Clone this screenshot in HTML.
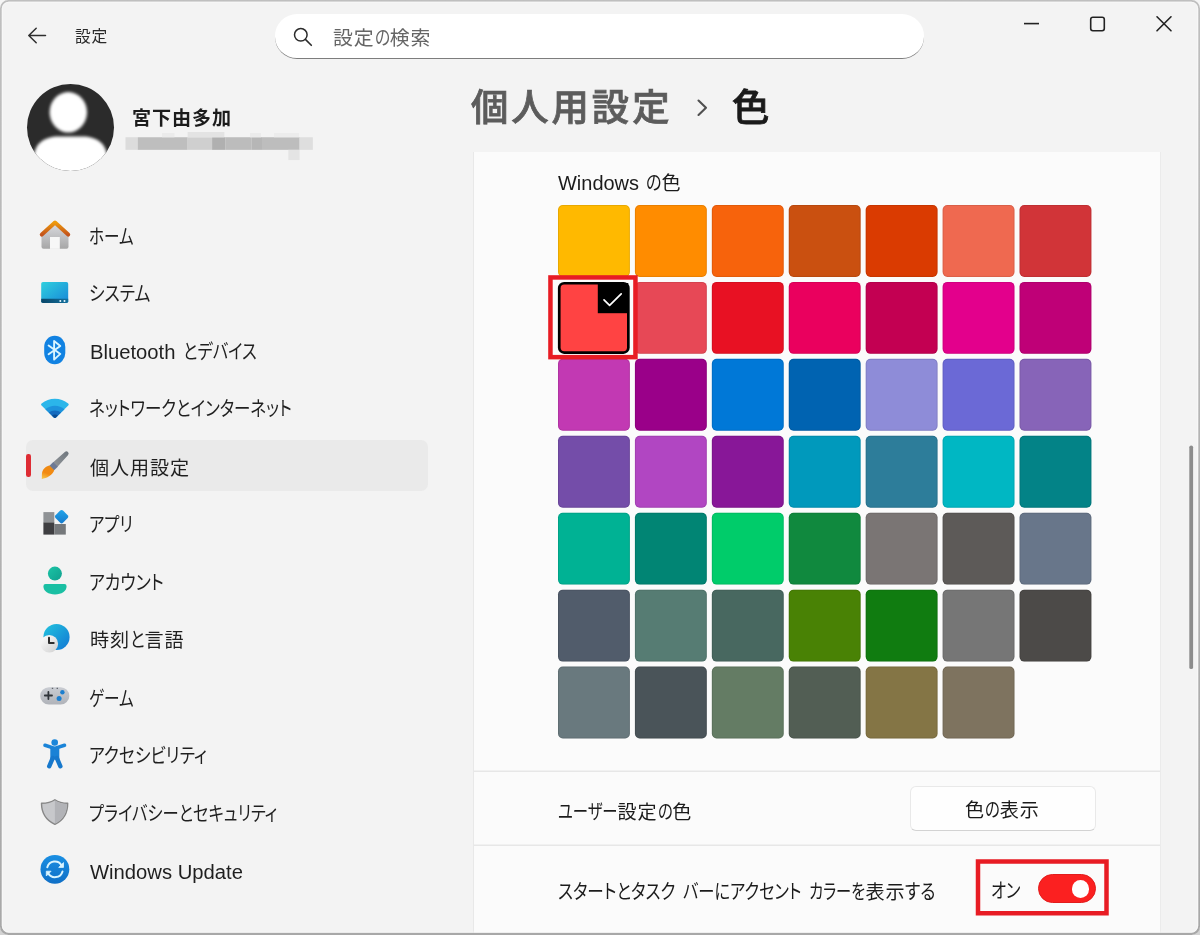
<!DOCTYPE html>
<html lang="ja">
<head>
<meta charset="utf-8">
<title>設定 - 色</title>
<style>
*{box-sizing:border-box;margin:0;padding:0}
html,body{width:1200px;height:935px;overflow:hidden;background:#f3f3f3}
body{font-family:"Liberation Sans","Noto Sans CJK JP",sans-serif;color:#1b1b1b;position:relative}
.t{position:absolute;white-space:nowrap;line-height:1;will-change:transform}
svg{position:absolute;overflow:visible}
.r{display:inline-block;white-space:nowrap}
.s{display:inline-block;transform-origin:0 50%;white-space:nowrap}
.k{font-feature-settings:"palt"}
#frame{position:absolute;left:0;top:0;width:1200px;height:935px;pointer-events:none;z-index:50}
/* title bar */
#search{position:absolute;left:275px;top:14px;width:649px;height:44.5px;border-radius:22px;background:#fff;border-bottom:1.5px solid #7d7d7d}
/* profile */
#avatar{position:absolute;left:27px;top:84px;width:87px;height:87px;border-radius:50%;background:#2b2b2b;overflow:hidden}
.mz{position:absolute}
/* nav */
#sel{position:absolute;left:26px;top:440px;width:402px;height:51px;border-radius:7px;background:#eaeaea}
#pill{position:absolute;left:26.2px;top:454.3px;width:4.4px;height:22.8px;border-radius:2.2px;background:#de2c34}
/* header */
/* card */
#card{position:absolute;left:472.5px;top:152px;width:688px;height:790px;background:#fbfbfb;border-left:1px solid #e8e8e8;border-right:1px solid #ebebeb}
.sep{position:absolute;left:473px;width:688px;height:1.5px;background:#e6e6e6}
.tile{position:absolute;width:72.1px;height:72px;border-radius:5px;box-shadow:inset 0 0 0 1px rgba(0,0,0,.09)}
#btn{position:absolute;left:909.5px;top:786px;width:186px;height:45px;border-radius:6px;background:#fefefe;border:1px solid #e9e9e9;border-bottom:1.5px solid #d3d3d3}
.redbox{position:absolute;border:4.5px solid #e81c23}
</style>
</head>
<body>
<!-- title bar -->
<svg style="left:26px;top:25px" width="22" height="22" viewBox="0 0 22 22"><path d="M19.5 10.5H3M10.2 3.2L2.8 10.5l7.4 7.3" fill="none" stroke="#2e2e2e" stroke-width="1.5" stroke-linecap="round" stroke-linejoin="round"/></svg>
<div id="search"><svg style="left:18px;top:13px" width="20" height="20" viewBox="0 0 20 20"><circle cx="7.8" cy="7.8" r="6.3" fill="none" stroke="#2b2b2b" stroke-width="1.5"/><path d="M12.4 12.4L18.3 18.3" stroke="#2b2b2b" stroke-width="1.6" stroke-linecap="round"/></svg></div>
<svg style="left:1024px;top:16px" width="150" height="16" viewBox="0 0 150 16"><path d="M0 7.6h15" stroke="#222" stroke-width="1.6"/><rect x="66.7" y="1.2" width="13.6" height="13.6" rx="2.2" fill="none" stroke="#222" stroke-width="1.6"/><path d="M133 0.8l14 14M147 0.8l-14 14" stroke="#222" stroke-width="1.6" stroke-linecap="round"/></svg>
<!-- profile -->
<div id="avatar"><svg style="left:0;top:0;filter:blur(1.5px)" width="87" height="87" viewBox="0 0 87 87"><ellipse cx="41.300" cy="28.300" rx="18.700" ry="20.200" fill="#fff"/><path d="M7 92V73C7 59 19 52.500 31 52.500H56C68 52.500 80 59 80 73V92Z" fill="#fff"/></svg></div>
<svg style="left:120px;top:128px" width="200" height="36" viewBox="120 128 200 36"><rect x="125.50" y="137.25" width="12.30" height="12.6" fill="#dcdcdc"/><rect x="137.75" y="137.25" width="49.90" height="12.6" fill="#bebebe"/><rect x="187.60" y="137.25" width="24.55" height="12.6" fill="#cfcfcf"/><rect x="212.10" y="137.25" width="13.20" height="12.6" fill="#b0b0b0"/><rect x="225.25" y="137.25" width="26.30" height="12.6" fill="#bcbcbc"/><rect x="251.50" y="137.25" width="10.55" height="12.6" fill="#b6b6b6"/><rect x="262.00" y="137.25" width="37.65" height="12.6" fill="#bdbdbd"/><rect x="299.60" y="137.25" width="13.25" height="12.6" fill="#dedede"/><rect x="187.6" y="132" width="36.8" height="5.3" fill="#e3e3e3"/><rect x="162" y="133" width="12.500" height="4.300" fill="#ebebeb"/><rect x="250" y="133" width="11" height="4.300" fill="#ebebeb"/><rect x="274" y="133" width="25" height="4.300" fill="#ececec"/><rect x="288.3" y="149.85" width="11.3" height="10.2" fill="#e4e4e4"/></svg>
<!-- nav -->
<div id="sel"></div><div id="pill"></div>
<!-- nav icons (page coordinates) -->
<svg style="left:0;top:200px" width="90" height="735" viewBox="0 200 90 735">
<defs>
<linearGradient id="gRoof" x1="0" y1="0" x2="0" y2="1"><stop offset="0" stop-color="#ee9a0c"/><stop offset="1" stop-color="#c4541b"/></linearGradient>
<linearGradient id="gHouse" x1="0" y1="0" x2="0" y2="1"><stop offset="0" stop-color="#dcdde2"/><stop offset="1" stop-color="#a6a6a6"/></linearGradient>
<linearGradient id="gSys" x1="0" y1="0" x2="1" y2="1"><stop offset="0" stop-color="#2fd0de"/><stop offset="1" stop-color="#1787d8"/></linearGradient>
<linearGradient id="gSysB" x1="0" y1="0" x2="1" y2="0"><stop offset="0" stop-color="#0a4668"/><stop offset="1" stop-color="#116f9c"/></linearGradient>
<linearGradient id="gBlue" x1="0" y1="0" x2="0" y2="1"><stop offset="0" stop-color="#1a8fe3"/><stop offset="1" stop-color="#0f6fc6"/></linearGradient>
<linearGradient id="gBrush" x1="1" y1="0" x2="0" y2="0"><stop offset="0" stop-color="#70787f"/><stop offset="1" stop-color="#8e9297"/></linearGradient>
<linearGradient id="gTip" x1="1" y1="0" x2="0" y2="0.300"><stop offset="0" stop-color="#ee8a14"/><stop offset=".6" stop-color="#f28a12"/><stop offset="1" stop-color="#f7c044"/></linearGradient>
<linearGradient id="gDia" x1="0" y1="0" x2="1" y2="1"><stop offset="0" stop-color="#22a6ea"/><stop offset="1" stop-color="#1478cc"/></linearGradient>
<linearGradient id="gTeal" x1="0" y1="0" x2="1" y2="1"><stop offset="0" stop-color="#1cc4a6"/><stop offset="1" stop-color="#10a08e"/></linearGradient>
<linearGradient id="gGlobe" x1="0" y1="0" x2="1" y2="1"><stop offset="0" stop-color="#22c4de"/><stop offset="1" stop-color="#1277d4"/></linearGradient>
<linearGradient id="gClock" x1="0" y1="0" x2="1" y2="1"><stop offset="0" stop-color="#ffffff"/><stop offset="1" stop-color="#cfcfcf"/></linearGradient>
<linearGradient id="gPad" x1="0" y1="0" x2="0" y2="1"><stop offset="0" stop-color="#c9ccd2"/><stop offset="1" stop-color="#b0b3b9"/></linearGradient>
</defs>
<!-- home -->
<path d="M41.5 234.5L55 222.5 68.5 234.5V246.8a2 2 0 0 1-2 2H43.5a2 2 0 0 1-2-2Z" fill="url(#gHouse)"/>
<rect x="50" y="237" width="9.8" height="11.9" fill="#f7f7f7"/>
<path d="M41.8 234.6L55 222.6 68.2 234.6" fill="none" stroke="url(#gRoof)" stroke-width="4" stroke-linecap="round" stroke-linejoin="round"/>
<!-- system -->
<rect x="41.2" y="281.9" width="27" height="21.1" rx="1.8" fill="url(#gSys)"/>
<path d="M41.2 298.7h27v2.5a1.8 1.8 0 0 1-1.8 1.8H43a1.8 1.8 0 0 1-1.8-1.8Z" fill="url(#gSysB)"/>
<circle cx="60.3" cy="301" r="1" fill="#e8f6ff"/><circle cx="64.5" cy="301" r="1" fill="#e8f6ff"/>
<!-- bluetooth -->
<rect x="44.2" y="335.7" width="21.1" height="28.6" rx="10.500" ry="11.200" fill="#1182e2"/>
<path d="M48.6 345.6L60.3 353.9 54.1 359.6V340.9L60.3 345.9 48.6 354.2" fill="none" stroke="#d9f5ff" stroke-width="1.9" stroke-linejoin="round" stroke-linecap="round"/>
<!-- wifi -->
<path d="M41.3 405.3Q40.6 404.3 41.6 403.500A20.800 20.800 0 0 1 68.200 403.500Q69.200 404.300 68.500 405.300L56.200 417.300Q54.900 418.500 53.600 417.300Z" fill="#2bb6ea"/>
<path d="M45.300 409.200A14.800 14.800 0 0 1 64.500 409.200L56.200 417.300Q54.900 418.500 53.600 417.300Z" fill="#1d93dc"/>
<path d="M48.800 412.600A9.600 9.600 0 0 1 61 412.600L56.200 417.300Q54.900 418.500 53.600 417.300Z" fill="#136bbf"/>
<path d="M51.900 415.600A4.800 4.800 0 0 1 57.900 415.600L56.200 417.300Q54.900 418.500 53.600 417.300Z" fill="#0b4c93"/>
<!-- brush -->
<g transform="translate(41.200 478.400) rotate(-44.500)">
<path d="M19.500 -3.100L35.300 -2.200a2.200 2.200 0 0 1 0 4.400L19.500 3.100Z" fill="url(#gBrush)"/>
<rect x="14.500" y="-3.300" width="5.600" height="6.600" fill="#6d7a96"/>
<path d="M0 0.800C2.500 -1 4.500 -5.100 9.500 -5 12 -4.900 14.900 -3.700 14.900 -3.300V3.300C11.500 5.800 3.500 3.800 0 0.800Z" fill="url(#gTip)"/>
</g>
<!-- apps -->
<rect x="43.4" y="512.1" width="10.9" height="10.6" fill="#8f9295"/>
<rect x="43.4" y="522.5" width="10.9" height="12.1" fill="#3e3e41"/>
<rect x="54.3" y="524" width="11.5" height="10.6" fill="#75787b"/>
<rect x="56.300" y="511.400" width="10.600" height="10.600" rx="2" transform="rotate(45 61.600 516.700)" fill="url(#gDia)"/>
<!-- account -->
<circle cx="54.9" cy="573.6" r="7" fill="url(#gTeal)"/>
<path d="M45.600 584.100H64.400a2.200 2.200 0 0 1 2.200 2.200C66.600 591.300 61.500 594.500 55 594.500S43.400 591.300 43.400 586.300a2.200 2.200 0 0 1 2.200-2.200Z" fill="#1abfa3"/>
<!-- time -->
<circle cx="56.5" cy="637" r="13.1" fill="url(#gGlobe)"/>
<circle cx="49.3" cy="643.7" r="8.8" fill="url(#gClock)"/>
<path d="M49 637.800V643.100H53.700" fill="none" stroke="#2e2e2e" stroke-width="2" stroke-linecap="round" stroke-linejoin="round"/>
<!-- game -->
<rect x="40.2" y="687.2" width="29.1" height="17.4" rx="8.7" fill="url(#gPad)"/>
<path d="M44.800 695.500h7.200M48.400 691.900v7.200" stroke="#30353a" stroke-width="1.8" stroke-linecap="round"/>
<circle cx="62.4" cy="692.3" r="2.2" fill="#1c7fcf"/><circle cx="59.1" cy="698.5" r="2.5" fill="#1c7fcf"/>
<path d="M51.800 688.300h1.400M56.600 688.300h1.400" stroke="#4a4e55" stroke-width="1"/>
<!-- accessibility -->
<circle cx="54.700" cy="742.500" r="3.300" fill="#1a86da"/>
<path d="M45 745.300L54.700 748.400 64.500 745.300" fill="none" stroke="#1a84d8" stroke-width="3.600" stroke-linecap="round" stroke-linejoin="round"/>
<path d="M50.300 747.500H59.300V759.500H50.300Z" fill="#1a82d6"/>
<path d="M52.800 758L49.200 766.300M56.800 758L60.400 766.300" fill="none" stroke="#1778cc" stroke-width="4.400" stroke-linecap="round"/>
<!-- shield -->
<path d="M54.900 799.700C58.500 802.200 62.500 803.200 67.700 803.200 67.700 813.500 64 820 54.900 824.400 45.800 820 41.500 813.500 41.500 803.200 47 803.200 51.300 802.200 54.900 799.700Z" fill="#c7c8cb" stroke="#878787" stroke-width="1.400" stroke-linejoin="round"/>
<path d="M54.900 800.600C58.300 802.800 62.200 803.900 66.900 804 66.800 813 63.400 819.300 54.900 823.500Z" fill="#b2b3b7"/>
<!-- update -->
<circle cx="54.900" cy="869.300" r="14.400" fill="url(#gBlue)"/>
<path d="M47.300 867.200A7.800 7.800 0 0 1 61.600 865.400" fill="none" stroke="#d9f4ff" stroke-width="2" stroke-linecap="round"/>
<path d="M63.500 862.600V867.400H58.700Z" fill="#d9f4ff" stroke="#d9f4ff" stroke-width=".8" stroke-linejoin="round"/>
<path d="M62.500 871.400A7.800 7.800 0 0 1 48.200 873.200" fill="none" stroke="#d9f4ff" stroke-width="2" stroke-linecap="round"/>
<path d="M46.300 876V871.200H51.100Z" fill="#d9f4ff" stroke="#d9f4ff" stroke-width=".8" stroke-linejoin="round"/>
</svg>
<!-- main -->
<svg style="left:697px;top:99px" width="11" height="18" viewBox="0 0 11 18"><path d="M1.5 1.5L9 8.7 1.5 16" fill="none" stroke="#505050" stroke-width="2.1" stroke-linecap="round" stroke-linejoin="round"/></svg>
<div id="card"></div>
<svg style="left:550px;top:200px" width="550" height="545" viewBox="550 200 550 545">
<rect x="558.00" y="205.00" width="71.90" height="71.90" rx="4.8" fill="#FFB900"/><rect x="558.50" y="205.50" width="70.90" height="70.90" rx="4.3" fill="none" stroke="#000" stroke-opacity=".09"/>
<rect x="634.92" y="205.00" width="71.90" height="71.90" rx="4.8" fill="#FF8C00"/><rect x="635.42" y="205.50" width="70.90" height="70.90" rx="4.3" fill="none" stroke="#000" stroke-opacity=".09"/>
<rect x="711.84" y="205.00" width="71.90" height="71.90" rx="4.8" fill="#F7630C"/><rect x="712.34" y="205.50" width="70.90" height="70.90" rx="4.3" fill="none" stroke="#000" stroke-opacity=".09"/>
<rect x="788.76" y="205.00" width="71.90" height="71.90" rx="4.8" fill="#CA5010"/><rect x="789.26" y="205.50" width="70.90" height="70.90" rx="4.3" fill="none" stroke="#000" stroke-opacity=".09"/>
<rect x="865.68" y="205.00" width="71.90" height="71.90" rx="4.8" fill="#DA3B01"/><rect x="866.18" y="205.50" width="70.90" height="70.90" rx="4.3" fill="none" stroke="#000" stroke-opacity=".09"/>
<rect x="942.60" y="205.00" width="71.90" height="71.90" rx="4.8" fill="#EF6950"/><rect x="943.10" y="205.50" width="70.90" height="70.90" rx="4.3" fill="none" stroke="#000" stroke-opacity=".09"/>
<rect x="1019.52" y="205.00" width="71.90" height="71.90" rx="4.8" fill="#D13438"/><rect x="1020.02" y="205.50" width="70.90" height="70.90" rx="4.3" fill="none" stroke="#000" stroke-opacity=".09"/>
<rect x="634.92" y="281.93" width="71.90" height="71.90" rx="4.8" fill="#E74856"/><rect x="635.42" y="282.43" width="70.90" height="70.90" rx="4.3" fill="none" stroke="#000" stroke-opacity=".09"/>
<rect x="711.84" y="281.93" width="71.90" height="71.90" rx="4.8" fill="#E81123"/><rect x="712.34" y="282.43" width="70.90" height="70.90" rx="4.3" fill="none" stroke="#000" stroke-opacity=".09"/>
<rect x="788.76" y="281.93" width="71.90" height="71.90" rx="4.8" fill="#EA005E"/><rect x="789.26" y="282.43" width="70.90" height="70.90" rx="4.3" fill="none" stroke="#000" stroke-opacity=".09"/>
<rect x="865.68" y="281.93" width="71.90" height="71.90" rx="4.8" fill="#C30052"/><rect x="866.18" y="282.43" width="70.90" height="70.90" rx="4.3" fill="none" stroke="#000" stroke-opacity=".09"/>
<rect x="942.60" y="281.93" width="71.90" height="71.90" rx="4.8" fill="#E3008C"/><rect x="943.10" y="282.43" width="70.90" height="70.90" rx="4.3" fill="none" stroke="#000" stroke-opacity=".09"/>
<rect x="1019.52" y="281.93" width="71.90" height="71.90" rx="4.8" fill="#BF0077"/><rect x="1020.02" y="282.43" width="70.90" height="70.90" rx="4.3" fill="none" stroke="#000" stroke-opacity=".09"/>
<rect x="558.00" y="358.86" width="71.90" height="71.90" rx="4.8" fill="#C239B3"/><rect x="558.50" y="359.36" width="70.90" height="70.90" rx="4.3" fill="none" stroke="#000" stroke-opacity=".09"/>
<rect x="634.92" y="358.86" width="71.90" height="71.90" rx="4.8" fill="#9A0089"/><rect x="635.42" y="359.36" width="70.90" height="70.90" rx="4.3" fill="none" stroke="#000" stroke-opacity=".09"/>
<rect x="711.84" y="358.86" width="71.90" height="71.90" rx="4.8" fill="#0078D7"/><rect x="712.34" y="359.36" width="70.90" height="70.90" rx="4.3" fill="none" stroke="#000" stroke-opacity=".09"/>
<rect x="788.76" y="358.86" width="71.90" height="71.90" rx="4.8" fill="#0063B1"/><rect x="789.26" y="359.36" width="70.90" height="70.90" rx="4.3" fill="none" stroke="#000" stroke-opacity=".09"/>
<rect x="865.68" y="358.86" width="71.90" height="71.90" rx="4.8" fill="#8E8CD8"/><rect x="866.18" y="359.36" width="70.90" height="70.90" rx="4.3" fill="none" stroke="#000" stroke-opacity=".09"/>
<rect x="942.60" y="358.86" width="71.90" height="71.90" rx="4.8" fill="#6B69D6"/><rect x="943.10" y="359.36" width="70.90" height="70.90" rx="4.3" fill="none" stroke="#000" stroke-opacity=".09"/>
<rect x="1019.52" y="358.86" width="71.90" height="71.90" rx="4.8" fill="#8764B8"/><rect x="1020.02" y="359.36" width="70.90" height="70.90" rx="4.3" fill="none" stroke="#000" stroke-opacity=".09"/>
<rect x="558.00" y="435.79" width="71.90" height="71.90" rx="4.8" fill="#744DA9"/><rect x="558.50" y="436.29" width="70.90" height="70.90" rx="4.3" fill="none" stroke="#000" stroke-opacity=".09"/>
<rect x="634.92" y="435.79" width="71.90" height="71.90" rx="4.8" fill="#B146C2"/><rect x="635.42" y="436.29" width="70.90" height="70.90" rx="4.3" fill="none" stroke="#000" stroke-opacity=".09"/>
<rect x="711.84" y="435.79" width="71.90" height="71.90" rx="4.8" fill="#881798"/><rect x="712.34" y="436.29" width="70.90" height="70.90" rx="4.3" fill="none" stroke="#000" stroke-opacity=".09"/>
<rect x="788.76" y="435.79" width="71.90" height="71.90" rx="4.8" fill="#0099BC"/><rect x="789.26" y="436.29" width="70.90" height="70.90" rx="4.3" fill="none" stroke="#000" stroke-opacity=".09"/>
<rect x="865.68" y="435.79" width="71.90" height="71.90" rx="4.8" fill="#2D7D9A"/><rect x="866.18" y="436.29" width="70.90" height="70.90" rx="4.3" fill="none" stroke="#000" stroke-opacity=".09"/>
<rect x="942.60" y="435.79" width="71.90" height="71.90" rx="4.8" fill="#00B7C3"/><rect x="943.10" y="436.29" width="70.90" height="70.90" rx="4.3" fill="none" stroke="#000" stroke-opacity=".09"/>
<rect x="1019.52" y="435.79" width="71.90" height="71.90" rx="4.8" fill="#038387"/><rect x="1020.02" y="436.29" width="70.90" height="70.90" rx="4.3" fill="none" stroke="#000" stroke-opacity=".09"/>
<rect x="558.00" y="512.72" width="71.90" height="71.90" rx="4.8" fill="#00B294"/><rect x="558.50" y="513.22" width="70.90" height="70.90" rx="4.3" fill="none" stroke="#000" stroke-opacity=".09"/>
<rect x="634.92" y="512.72" width="71.90" height="71.90" rx="4.8" fill="#018574"/><rect x="635.42" y="513.22" width="70.90" height="70.90" rx="4.3" fill="none" stroke="#000" stroke-opacity=".09"/>
<rect x="711.84" y="512.72" width="71.90" height="71.90" rx="4.8" fill="#00CC6A"/><rect x="712.34" y="513.22" width="70.90" height="70.90" rx="4.3" fill="none" stroke="#000" stroke-opacity=".09"/>
<rect x="788.76" y="512.72" width="71.90" height="71.90" rx="4.8" fill="#10893E"/><rect x="789.26" y="513.22" width="70.90" height="70.90" rx="4.3" fill="none" stroke="#000" stroke-opacity=".09"/>
<rect x="865.68" y="512.72" width="71.90" height="71.90" rx="4.8" fill="#7A7574"/><rect x="866.18" y="513.22" width="70.90" height="70.90" rx="4.3" fill="none" stroke="#000" stroke-opacity=".09"/>
<rect x="942.60" y="512.72" width="71.90" height="71.90" rx="4.8" fill="#5D5A58"/><rect x="943.10" y="513.22" width="70.90" height="70.90" rx="4.3" fill="none" stroke="#000" stroke-opacity=".09"/>
<rect x="1019.52" y="512.72" width="71.90" height="71.90" rx="4.8" fill="#68768A"/><rect x="1020.02" y="513.22" width="70.90" height="70.90" rx="4.3" fill="none" stroke="#000" stroke-opacity=".09"/>
<rect x="558.00" y="589.65" width="71.90" height="71.90" rx="4.8" fill="#515C6B"/><rect x="558.50" y="590.15" width="70.90" height="70.90" rx="4.3" fill="none" stroke="#000" stroke-opacity=".09"/>
<rect x="634.92" y="589.65" width="71.90" height="71.90" rx="4.8" fill="#567C73"/><rect x="635.42" y="590.15" width="70.90" height="70.90" rx="4.3" fill="none" stroke="#000" stroke-opacity=".09"/>
<rect x="711.84" y="589.65" width="71.90" height="71.90" rx="4.8" fill="#486860"/><rect x="712.34" y="590.15" width="70.90" height="70.90" rx="4.3" fill="none" stroke="#000" stroke-opacity=".09"/>
<rect x="788.76" y="589.65" width="71.90" height="71.90" rx="4.8" fill="#498205"/><rect x="789.26" y="590.15" width="70.90" height="70.90" rx="4.3" fill="none" stroke="#000" stroke-opacity=".09"/>
<rect x="865.68" y="589.65" width="71.90" height="71.90" rx="4.8" fill="#107C10"/><rect x="866.18" y="590.15" width="70.90" height="70.90" rx="4.3" fill="none" stroke="#000" stroke-opacity=".09"/>
<rect x="942.60" y="589.65" width="71.90" height="71.90" rx="4.8" fill="#767676"/><rect x="943.10" y="590.15" width="70.90" height="70.90" rx="4.3" fill="none" stroke="#000" stroke-opacity=".09"/>
<rect x="1019.52" y="589.65" width="71.90" height="71.90" rx="4.8" fill="#4C4A48"/><rect x="1020.02" y="590.15" width="70.90" height="70.90" rx="4.3" fill="none" stroke="#000" stroke-opacity=".09"/>
<rect x="558.00" y="666.58" width="71.90" height="71.90" rx="4.8" fill="#69797E"/><rect x="558.50" y="667.08" width="70.90" height="70.90" rx="4.3" fill="none" stroke="#000" stroke-opacity=".09"/>
<rect x="634.92" y="666.58" width="71.90" height="71.90" rx="4.8" fill="#4A5459"/><rect x="635.42" y="667.08" width="70.90" height="70.90" rx="4.3" fill="none" stroke="#000" stroke-opacity=".09"/>
<rect x="711.84" y="666.58" width="71.90" height="71.90" rx="4.8" fill="#647C64"/><rect x="712.34" y="667.08" width="70.90" height="70.90" rx="4.3" fill="none" stroke="#000" stroke-opacity=".09"/>
<rect x="788.76" y="666.58" width="71.90" height="71.90" rx="4.8" fill="#525E54"/><rect x="789.26" y="667.08" width="70.90" height="70.90" rx="4.3" fill="none" stroke="#000" stroke-opacity=".09"/>
<rect x="865.68" y="666.58" width="71.90" height="71.90" rx="4.8" fill="#847545"/><rect x="866.18" y="667.08" width="70.90" height="70.90" rx="4.3" fill="none" stroke="#000" stroke-opacity=".09"/>
<rect x="942.60" y="666.58" width="71.90" height="71.90" rx="4.8" fill="#7E735F"/><rect x="943.10" y="667.08" width="70.90" height="70.90" rx="4.3" fill="none" stroke="#000" stroke-opacity=".09"/>
</svg>
<svg style="left:550px;top:275px" width="90" height="90" viewBox="550 275 90 90"><rect x="557.900" y="281.900" width="71.800" height="72" rx="6.200" fill="#000"/><rect x="560.600" y="284.600" width="66.400" height="66.600" rx="3.600" fill="#ff4343"/><rect x="597.800" y="283" width="30.500" height="30.200" fill="#000"/><path d="M604 299.800l5.600 5.600L621.200 293.800" fill="none" stroke="#fff" stroke-width="1.700" stroke-linecap="round" stroke-linejoin="round"/></svg>
<svg style="left:540px;top:270px" width="110" height="100" viewBox="540 270 110 100"><rect x="550.45" y="277.45" width="85" height="79.7" fill="none" stroke="#e81c24" stroke-width="4.500"/></svg>
<svg style="left:473px;top:760px" width="688" height="100" viewBox="473 760 688 100"><path d="M473.500 771.300H1160M473.500 845.300H1160" stroke="#e7e7e7" stroke-width="1.500"/></svg>
<div id="btn"></div>
<div style="position:absolute;left:1038.4px;top:874.4px;width:57.5px;height:28.7px;border-radius:15px;background:#fb2020;border:1px solid #e21c1c"></div>
<div style="position:absolute;left:1071.9px;top:880.2px;width:17.5px;height:17.5px;border-radius:50%;background:#fff"></div>
<svg style="left:970px;top:850px" width="150" height="80" viewBox="970 850 150 80"><rect x="978" y="861.5" width="128.500" height="51.750" fill="none" stroke="#e81c24" stroke-width="4.500"/></svg>
<!-- scrollbar -->
<svg style="left:1180px;top:440px" width="20" height="240" viewBox="1180 440 20 240"><path d="M1191.200 447.300V667.200" stroke="#8c8c8c" stroke-width="3.800" stroke-linecap="round"/></svg>

<!-- text -->
<div class="t" id="L0" style="left:75px;top:28.35px;font-size:16.5px;color:#2a2a2a"><span class="s" style="font-size:15.76px;letter-spacing:0.74px;">設定</span></div>
<div class="t" id="L1" style="left:333.3px;top:27.55px;font-size:20.8px;color:#666"><span class="s" style="font-size:19.86px;letter-spacing:0.94px;">設定</span><span class="r" style="width:15.20px"><span class="s k" style="font-size:20.80px;transform:scaleX(0.7576)">の</span></span><span class="s" style="font-size:19.86px;letter-spacing:0.94px;">検索</span></div>
<div class="t" id="L2" style="left:132px;top:108.20px;font-size:20px;font-weight:700;color:#1c1c1c"><span class="s" style="font-size:19.10px;letter-spacing:0.90px;">宮下由多加</span></div>
<div class="t" id="L3" style="left:89.4px;top:227.00px;font-size:20px;color:#1f1f1f"><span class="r" style="width:44.50px"><span class="s k" style="font-size:20.00px;transform:scaleX(0.7775)">ホーム</span></span></div>
<div class="t" id="L4" style="left:89.4px;top:284.00px;font-size:20px;color:#1f1f1f"><span class="r" style="width:61.30px"><span class="s k" style="font-size:20.00px;transform:scaleX(0.8419)">システム</span></span></div>
<div class="t" id="L5" style="left:90px;top:338.50px;font-size:20px;color:#1f1f1f"><span class="r" style="width:85.50px"><span class="s" style="transform:scaleX(1.0116)">Bluetooth</span></span><span class="r" style="width:7.50px;white-space:pre;overflow:hidden"> </span><span class="r" style="width:73.80px"><span class="s k" style="font-size:20.00px;transform:scaleX(0.8177)">とデバイス</span></span></div>
<div class="t" id="L6" style="left:89.4px;top:399.00px;font-size:20px;color:#1f1f1f"><span class="r" style="width:202.80px"><span class="s k" style="font-size:20.00px;transform:scaleX(0.8235)">ネットワークとインターネット</span></span></div>
<div class="t" id="L7" style="left:90px;top:457.75px;font-size:20px;color:#1f1f1f"><span class="s" style="font-size:19.10px;letter-spacing:0.90px;">個人用設定</span></div>
<div class="t" id="L8" style="left:89.4px;top:514.50px;font-size:20px;color:#1f1f1f"><span class="r" style="width:43.80px"><span class="s k" style="font-size:20.00px;transform:scaleX(0.8201)">アプリ</span></span></div>
<div class="t" id="L9" style="left:89.4px;top:573.25px;font-size:20px;color:#1f1f1f"><span class="r" style="width:74.80px"><span class="s k" style="font-size:20.00px;transform:scaleX(0.8468)">アカウント</span></span></div>
<div class="t" id="L10" style="left:90px;top:629.75px;font-size:20px;color:#1f1f1f"><span class="s" style="font-size:19.10px;letter-spacing:0.90px;">時刻</span><span class="r" style="width:14.60px"><span class="s k" style="font-size:20.00px;transform:scaleX(0.8284)">と</span></span><span class="s" style="font-size:19.10px;letter-spacing:0.90px;">言語</span></div>
<div class="t" id="L11" style="left:89.4px;top:688.50px;font-size:20px;color:#1f1f1f"><span class="r" style="width:44.70px"><span class="s k" style="font-size:20.00px;transform:scaleX(0.7810)">ゲーム</span></span></div>
<div class="t" id="L12" style="left:89.4px;top:745.75px;font-size:20px;color:#1f1f1f"><span class="r" style="width:117.80px"><span class="s k" style="font-size:20.00px;transform:scaleX(0.8398)">アクセシビリティ</span></span></div>
<div class="t" id="L13" style="left:89.4px;top:803.75px;font-size:20px;color:#1f1f1f"><span class="r" style="width:188.30px"><span class="s k" style="font-size:20.00px;transform:scaleX(0.8147)">プライバシーとセキュリティ</span></span></div>
<div class="t" id="L14" style="left:90px;top:862.00px;font-size:20px;color:#1f1f1f"><span class="r" style="width:153.00px"><span class="s" style="transform:scaleX(1.0120)">Windows Update</span></span></div>
<div class="t" id="L15" style="left:471px;top:87.30px;font-size:40px;font-weight:500;color:#5c5c5c;-webkit-text-stroke:0.75px #5c5c5c"><span class="s" style="font-size:38.20px;letter-spacing:1.80px;font-size:37.4px;letter-spacing:2.9px;">個人用設定</span></div>
<div class="t" id="L16" style="left:732px;top:87.30px;font-size:40px;font-weight:500;color:#1a1a1a;-webkit-text-stroke:0.8px #1a1a1a"><span class="s" style="font-size:38.20px;letter-spacing:1.80px;font-size:37.4px;letter-spacing:2.9px;">色</span></div>
<div class="t" id="L17" style="left:558px;top:170.45px;font-size:20px;color:#1b1b1b"><span class="r" style="width:81.00px"><span class="s" style="transform:scaleX(0.9983)">Windows</span></span><span class="r" style="width:7.00px;white-space:pre;overflow:hidden"> </span><span class="r" style="width:15.50px"><span class="s k" style="font-size:20.00px;transform:scaleX(0.8039)">の</span></span><span class="s" style="font-size:19.10px;letter-spacing:0.90px;">色</span></div>
<div class="t" id="L18" style="left:557.5px;top:801.70px;font-size:20px;color:#1b1b1b"><span class="r" style="width:59.50px"><span class="s k" style="font-size:20.00px;transform:scaleX(0.7654)">ユーザー</span></span><span class="s" style="font-size:19.10px;letter-spacing:0.90px;">設定</span><span class="r" style="width:14.80px"><span class="s k" style="font-size:20.00px;transform:scaleX(0.7676)">の</span></span><span class="s" style="font-size:19.10px;letter-spacing:0.90px;">色</span></div>
<div class="t" id="L19" style="left:964.5px;top:799.50px;font-size:20px;color:#1b1b1b"><span class="s" style="font-size:19.10px;letter-spacing:0.90px;">色</span><span class="r" style="width:14.80px"><span class="s k" style="font-size:20.00px;transform:scaleX(0.7676)">の</span></span><span class="s" style="font-size:19.10px;letter-spacing:0.90px;">表示</span></div>
<div class="t" id="L20" style="left:557.5px;top:878.50px;font-size:20px;color:#1b1b1b"><span class="r" style="width:117.30px"><span class="s k" style="font-size:20.00px;transform:scaleX(0.8283)">スタートとタスク</span></span><span class="r" style="width:8.00px;white-space:pre;overflow:hidden"> </span><span class="r" style="width:118.50px"><span class="s k" style="font-size:20.00px;transform:scaleX(0.8136)">バーにアクセント</span></span><span class="r" style="width:7.50px;white-space:pre;overflow:hidden"> </span><span class="r" style="width:56.20px"><span class="s k" style="font-size:20.00px;transform:scaleX(0.7596)">カラーを</span></span><span class="s" style="font-size:19.10px;letter-spacing:0.90px;">表示</span><span class="r" style="width:30.50px"><span class="s k" style="font-size:20.00px;transform:scaleX(0.8465)">する</span></span></div>
<div class="t" id="L21" style="left:991px;top:881.25px;font-size:20px;color:#1b1b1b"><span class="r" style="width:29.50px"><span class="s k" style="font-size:20.00px;transform:scaleX(0.8152)">オン</span></span></div>
<!-- window frame -->
<svg id="frame" width="1200" height="935" viewBox="0 0 1200 935">
<defs><linearGradient id="gFrame" x1="0" y1="0" x2="0" y2="1"><stop offset="0" stop-color="#bfbfbf"/><stop offset="1" stop-color="#a8a8a8"/></linearGradient></defs>
<path fill="#f5f5f5" d="M0 0H9A9 9 0 0 0 0 9ZM1200 0V9A9 9 0 0 0 1191 0Z"/>
<path fill="#d3d3d3" d="M0 935V926A9 9 0 0 0 9 935ZM1200 935H1191A9 9 0 0 0 1200 926Z"/>
<path fill-rule="evenodd" fill="url(#gFrame)" d="M8.500 0H1191.500A8.500 8.500 0 0 1 1200 8.500V926.500A8.500 8.500 0 0 1 1191.500 935H8.500A8.500 8.500 0 0 1 0 926.500V8.500A8.500 8.500 0 0 1 8.500 0ZM8.800 1.700A7 7 0 0 0 1.800 8.700V925.700A7 7 0 0 0 8.800 932.700H1191.200A7 7 0 0 0 1198.200 925.700V8.700A7 7 0 0 0 1191.200 1.700Z"/>
<rect x="2.300" y="2.200" width="1195.400" height="930" rx="6.500" fill="none" stroke="#fafafa" stroke-width="1" opacity=".7"/>
</svg>
</body>
</html>
